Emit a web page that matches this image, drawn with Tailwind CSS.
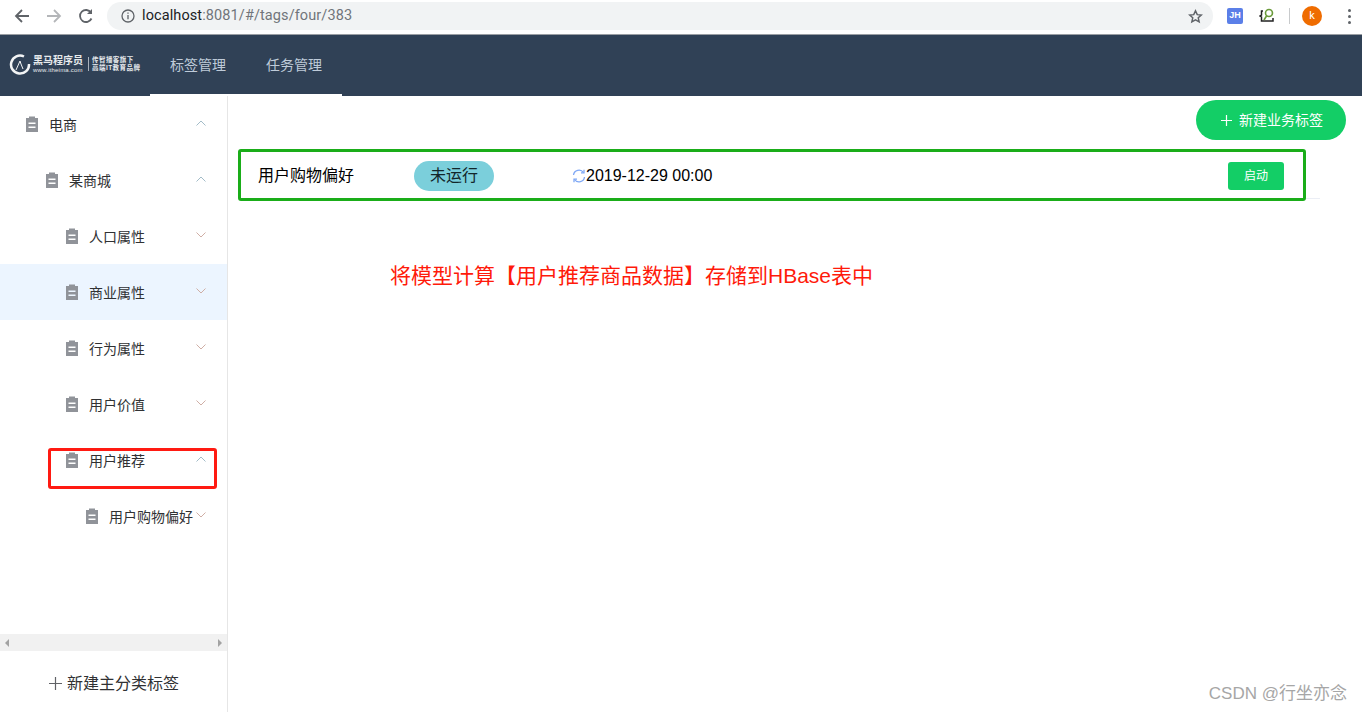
<!DOCTYPE html>
<html lang="zh-CN">
<head>
  <meta charset="UTF-8">
  <title>标签管理</title>
  <script src="https://cdn.jsdelivr.net/npm/@tailwindcss/browser@4"></script>
</head>
<body class="w-[1362px] h-[712px] overflow-hidden bg-white flex flex-col font-['Liberation_Sans','Noto_Sans_CJK_SC',sans-serif]">

  <!-- Browser toolbar -->
  <div class="h-[35px] shrink-0 flex items-center pb-[2px] border-b border-[#9a9ea3] bg-white">
    <svg class="w-4 h-4 ml-[14px]" viewBox="0 0 16 16" fill="none" stroke="#5f6368" stroke-width="1.8"><path d="M15 8H2M8 2 2 8l6 6"/></svg>
    <svg class="w-4 h-4 ml-4" viewBox="0 0 16 16" fill="none" stroke="#b4b6b9" stroke-width="1.8"><path d="M1 8h13M8 2l6 6-6 6"/></svg>
    <svg class="w-4 h-4 ml-4" viewBox="0 0 16 16" fill="none" stroke="#5f6368" stroke-width="1.8"><path d="M13.5 10.5A6 6 0 1 1 13 4.6"/><path d="M14 1v5H9" fill="#5f6368" stroke="none"/></svg>
    <div class="ml-[13px] w-[1106px] h-7 rounded-full bg-[#f1f3f4] flex items-center">
      <svg class="w-[14px] h-[14px] ml-[14px]" viewBox="0 0 14 14" fill="none" stroke="#5f6368" stroke-width="1.3"><circle cx="7" cy="7" r="6"/><path d="M7 6v4.2M7 3.4v1.4"/></svg>
      <span class="ml-[7px] text-[14.5px] tracking-[0.1px] text-[#70757a] font-['Roboto',sans-serif]"><span class="text-[#202124]">localhost</span>:8081/#/tags/four/383</span>
      <svg class="w-[15px] h-[15px] ml-auto mr-[10px]" viewBox="0 0 24 24" fill="none" stroke="#5f6368" stroke-width="2.4"><path d="m12 3 2.8 6 6.5.7-4.900 4.400 1.400 6.400L12 17.200l-5.800 3.300 1.400-6.400L2.700 9.700 9.200 9z"/></svg>
    </div>
    <div class="ml-[14px] w-4 h-4 rounded-[2px] bg-[#5b7fe8] text-white text-[9px] font-bold flex items-center justify-center">JH</div>
    <svg class="w-4 h-4 ml-4" viewBox="0 0 16 16" fill="none"><path d="M4 3H2.500v4L1 8l1.500 1v4H14v-3" stroke="#222" stroke-width="1.500"/><circle cx="10" cy="5" r="3.500" stroke="#6a9a3a" stroke-width="1.600"/><path d="m7.500 8-2.500 4" stroke="#6a9a3a" stroke-width="1.600"/></svg>
    <div class="ml-[14px] w-px h-4 bg-[#c8cacc]"></div>
    <div class="ml-3 w-5 h-5 rounded-full bg-[#ef6c00] text-white text-[11px] flex items-center justify-center font-['Roboto',sans-serif]">k</div>
    <div class="ml-[26px] flex flex-col gap-[3px]">
      <span class="w-[3px] h-[3px] rounded-full bg-[#5f6368]"></span>
      <span class="w-[3px] h-[3px] rounded-full bg-[#5f6368]"></span>
      <span class="w-[3px] h-[3px] rounded-full bg-[#5f6368]"></span>
    </div>
  </div>

  <!-- Top nav -->
  <header class="h-[61px] shrink-0 bg-[#304156] flex items-stretch">
    <div class="w-[150px] flex items-center pl-[9px] pb-[3px] text-[#e6e9ec]">
      <svg class="w-[22px] h-[22px] shrink-0" viewBox="0 0 22 22" fill="none" stroke="#f2f4f5"><path d="M15 3.500A9 9 0 1 0 20 11" stroke-width="2.500"/><path d="m7 17 4-9 1 3 2 5" stroke-width="1"/></svg>
      <div class="ml-[2px] leading-none">
        <div class="text-[10px] font-bold whitespace-nowrap">黑马程序员</div>
        <div class="text-[6px] mt-[1px] tracking-[0.2px] whitespace-nowrap">www.itheima.com</div>
      </div>
      <div class="ml-[5px] mr-[3px] w-px h-[14px] bg-[#aab2bc]"></div>
      <div class="text-[6.500px] leading-[8px] tracking-[0.45px] font-bold whitespace-nowrap">传智播客旗下<br>高端IT教育品牌</div>
    </div>
    <nav class="flex border-b-2 border-white w-[192px] text-[14px] text-[#bfcbd9]">
      <a class="w-[96px] pl-5 pt-[2px] flex items-center" href="#">标签管理</a>
      <a class="w-[96px] pl-5 pt-[2px] flex items-center" href="#">任务管理</a>
    </nav>
  </header>

  <div class="flex-1 flex min-h-0">

    <!-- Sidebar -->
    <aside class="w-[228px] shrink-0 border-r border-[#e6e6e6] flex flex-col relative">
      <div class="h-[538px] text-[14px] text-[#303133]">
        <div class="h-14 flex items-center pl-[25px] pr-[21px]">
          <svg class="w-[14px] h-[16px] shrink-0" viewBox="0 0 14 16"><path fill="#909399" d="M1 2h3V0.500h6V2h3v14H1zM3.500 6.500v1.500h7V6.500zm0 4v1.500h7v-1.500z"/></svg>
          <span class="ml-[10px] mt-[2px]">电商</span>
          <svg class="w-[10px] h-[6px] ml-auto mb-[2px]" viewBox="0 0 10 6" fill="none" stroke="#a3bcc8"><path d="m.5 5.500 4.500-4.500 4.500 4.500"/></svg>
        </div>
        <div class="h-14 flex items-center pl-[45px] pr-[21px]">
          <svg class="w-[14px] h-[16px] shrink-0" viewBox="0 0 14 16"><path fill="#909399" d="M1 2h3V0.500h6V2h3v14H1zM3.500 6.500v1.500h7V6.500zm0 4v1.500h7v-1.500z"/></svg>
          <span class="ml-[10px] mt-[2px]">某商城</span>
          <svg class="w-[10px] h-[6px] ml-auto mb-[2px]" viewBox="0 0 10 6" fill="none" stroke="#a3bcc8"><path d="m.5 5.500 4.500-4.500 4.500 4.500"/></svg>
        </div>
        <div class="h-14 flex items-center pl-[65px] pr-[21px]">
          <svg class="w-[14px] h-[16px] shrink-0" viewBox="0 0 14 16"><path fill="#909399" d="M1 2h3V0.500h6V2h3v14H1zM3.500 6.500v1.500h7V6.500zm0 4v1.500h7v-1.500z"/></svg>
          <span class="ml-[10px] mt-[2px]">人口属性</span>
          <svg class="w-[10px] h-[6px] ml-auto mb-[2px]" viewBox="0 0 10 6" fill="none" stroke="#cfaea5"><path d="m.5.500 4.500 4.500 4.500-4.500"/></svg>
        </div>
        <div class="h-14 flex items-center pl-[65px] pr-[21px] bg-[#ecf5ff]">
          <svg class="w-[14px] h-[16px] shrink-0" viewBox="0 0 14 16"><path fill="#909399" d="M1 2h3V0.500h6V2h3v14H1zM3.500 6.500v1.500h7V6.500zm0 4v1.500h7v-1.500z"/></svg>
          <span class="ml-[10px] mt-[2px]">商业属性</span>
          <svg class="w-[10px] h-[6px] ml-auto mb-[2px]" viewBox="0 0 10 6" fill="none" stroke="#cfaea5"><path d="m.5.500 4.500 4.500 4.500-4.500"/></svg>
        </div>
        <div class="h-14 flex items-center pl-[65px] pr-[21px]">
          <svg class="w-[14px] h-[16px] shrink-0" viewBox="0 0 14 16"><path fill="#909399" d="M1 2h3V0.500h6V2h3v14H1zM3.500 6.500v1.500h7V6.500zm0 4v1.500h7v-1.500z"/></svg>
          <span class="ml-[10px] mt-[2px]">行为属性</span>
          <svg class="w-[10px] h-[6px] ml-auto mb-[2px]" viewBox="0 0 10 6" fill="none" stroke="#cfaea5"><path d="m.5.500 4.500 4.500 4.500-4.500"/></svg>
        </div>
        <div class="h-14 flex items-center pl-[65px] pr-[21px]">
          <svg class="w-[14px] h-[16px] shrink-0" viewBox="0 0 14 16"><path fill="#909399" d="M1 2h3V0.500h6V2h3v14H1zM3.500 6.500v1.500h7V6.500zm0 4v1.500h7v-1.500z"/></svg>
          <span class="ml-[10px] mt-[2px]">用户价值</span>
          <svg class="w-[10px] h-[6px] ml-auto mb-[2px]" viewBox="0 0 10 6" fill="none" stroke="#cfaea5"><path d="m.5.500 4.500 4.500 4.500-4.500"/></svg>
        </div>
        <div class="h-14 flex items-center pl-[65px] pr-[21px]">
          <svg class="w-[14px] h-[16px] shrink-0" viewBox="0 0 14 16"><path fill="#909399" d="M1 2h3V0.500h6V2h3v14H1zM3.500 6.500v1.500h7V6.500zm0 4v1.500h7v-1.500z"/></svg>
          <span class="ml-[10px] mt-[2px]">用户推荐</span>
          <svg class="w-[10px] h-[6px] ml-auto mb-[2px]" viewBox="0 0 10 6" fill="none" stroke="#a3bcc8"><path d="m.5 5.500 4.500-4.500 4.500 4.500"/></svg>
        </div>
        <div class="h-14 flex items-center pl-[85px] pr-[21px]">
          <svg class="w-[14px] h-[16px] shrink-0" viewBox="0 0 14 16"><path fill="#909399" d="M1 2h3V0.500h6V2h3v14H1zM3.500 6.500v1.500h7V6.500zm0 4v1.500h7v-1.500z"/></svg>
          <span class="ml-[10px] mt-[2px] whitespace-nowrap">用户购物偏好</span>
          <svg class="w-[10px] h-[6px] ml-auto mb-[2px]" viewBox="0 0 10 6" fill="none" stroke="#cfaea5"><path d="m.5.500 4.500 4.500 4.500-4.500"/></svg>
        </div>
      </div>
      <!-- horizontal scrollbar -->
      <div class="h-[17px] bg-[#f1f1f1] flex items-center justify-between px-[5px]">
        <span class="w-0 h-0 border-y-[4px] border-y-transparent border-r-[4px] border-r-[#a3a3a3]"></span>
        <span class="w-0 h-0 border-y-[4px] border-y-transparent border-l-[4px] border-l-[#a3a3a3]"></span>
      </div>
      <div class="flex-1 flex items-center pl-[49px] pt-1 text-[16px] text-[#303133]">
        <svg class="w-[13px] h-[13px]" viewBox="0 0 13 13" stroke="#606266" stroke-width="1.200"><path d="M0 6.500h13M6.500 0v13"/></svg>
        <span class="ml-[5px]">新建主分类标签</span>
      </div>
      <!-- red annotation box -->
      <div class="absolute left-[48px] top-[352px] w-[169px] h-[41px] border-[3px] border-[#ff1a12] rounded-[3px]"></div>
    </aside>

    <!-- Main -->
    <main class="flex-1 relative min-w-0">
      <div class="flex justify-end pt-1 pr-4">
        <button class="w-[150px] h-10 rounded-full bg-[#13ce66] text-white text-[14px] flex items-center pl-[25px]">
          <svg class="w-[11px] h-[11px]" viewBox="0 0 11 11" stroke="#fff" stroke-width="1.200"><path d="M0 5.500h11M5.500 0v11"/></svg>
          <span class="ml-[7px]">新建业务标签</span>
        </button>
      </div>
      <div class="relative mt-[9px] ml-[10px] mr-[42px] h-[50px] pt-1 flex items-center border-b border-[#ebeef5] text-[16px] text-black">
        <span class="ml-5 w-[156px]">用户购物偏好</span>
        <span class="w-20 h-[30px] rounded-full bg-[#7bcfdb] flex items-center justify-center text-[#12262a]">未运行</span>
        <svg class="ml-[78px] w-[14px] h-[14px] shrink-0" viewBox="0 0 14 14" fill="none" stroke="#7fa8f5" stroke-width="1.300"><path d="M1.500 6A5.500 5.500 0 0 1 11.500 3.500M12.500 8A5.500 5.500 0 0 1 2.500 10.500"/><path d="M12 .8v3H9M2 13.200v-3h3"/></svg>
        <span>2019-12-29 00:00</span>
        <button class="ml-auto mr-[36px] w-14 h-7 rounded-[3px] bg-[#13ce66] text-white text-[12px]">启动</button>
        <!-- green annotation box -->
        <div class="absolute left-0 top-0 w-[1068px] h-[52px] border-[3px] border-[#1aad19] rounded-[3px]"></div>
      </div>
      <p class="mt-[63px] ml-[162px] text-[21px] leading-7 text-[#ff1a0a] whitespace-nowrap">将模型计算【用户推荐商品数据】存储到HBase表中</p>
      <!-- watermark -->
      <div class="absolute right-[15px] bottom-2 text-[17px] leading-5 text-[#a6a6a6]">CSDN @行坐亦念</div>
    </main>
  </div>

</body>
</html>
